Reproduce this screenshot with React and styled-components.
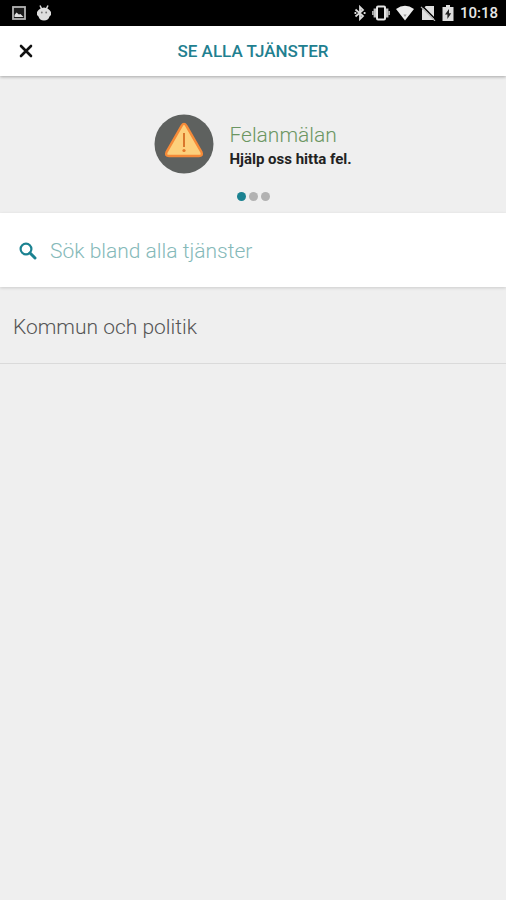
import React, { useState } from "react";
import styled, { createGlobalStyle } from "styled-components";

const slides = [
  { title: "Felanmälan", text: "Hjälp oss hitta fel." },
  { title: "Felanmälan", text: "Hjälp oss hitta fel." },
  { title: "Felanmälan", text: "Hjälp oss hitta fel." },
];

const categories = ["Kommun och politik"];

const StatusIcons = () => (
  <>
    <svg width="14" height="14" viewBox="0 0 14 14">
      <rect x="1" y="1" width="12" height="12" fill="#1c1c1c" stroke="#b4b4b4" strokeWidth="1.8" />
      <path d="M2.5 11V9l2-2.6 2.4 2.2L8.5 8l3 3z" fill="#e0e0e0" />
    </svg>
    <svg width="14" height="16" viewBox="0 0 14 16">
      <path d="M3 .5l2 4M11 .5l-2 4" stroke="#dedede" strokeWidth="1.5" />
      <path d="M1.5 5Q3.5 2.5 7 2.5T12.5 5L14 7v3l-1.5 1.5q-1 4-5.5 4t-5.5-4L0 10V7z" fill="#dedede" />
      <circle cx="4.8" cy="7.5" r="0.9" fill="#777" />
      <circle cx="9.2" cy="7.5" r="0.9" fill="#777" />
    </svg>
  </>
);

const SystemIcons = () => (
  <>
    <svg width="12" height="16" viewBox="0 0 12 16">
      <path d="M1.5 4.5 9 11 6 14V2l3 3-7.5 6.5" fill="none" stroke="#dcdcdc" strokeWidth="1.8" />
      <path d="M.5 7h1.8v2H.5zM9.7 7h1.8v2H9.7z" fill="#dcdcdc" />
    </svg>
    <svg width="18" height="16" viewBox="0 0 18 16">
      <rect x="5" y="1.5" width="8" height="13" rx="1" fill="none" stroke="#e4e4e4" strokeWidth="2" />
      <path d="M2.8 3.5v9M15.2 3.5v9" stroke="#c4c4c4" strokeWidth="2.4" />
      <path d="M.9 6v4M17.1 6v4" stroke="#aaa" strokeWidth="1.8" />
    </svg>
    <svg width="18" height="16" viewBox="0 0 18 16">
      <path d="M0 4Q9-2.4 18 4L9 15.5z" fill="#ececec" />
      <path d="M7.4 9.4h3.2L9 12z" fill="#999" />
    </svg>
    <svg width="16" height="16" viewBox="0 0 16 16">
      <path d="M5.8 1H14v14H2V4.8z" fill="#dedede" />
      <path d="M2 .8 16 14.8" stroke="#000" strokeWidth="1.6" />
      <path d="M1 1.8 15 15.8" stroke="#b8b8b8" strokeWidth="1.2" />
    </svg>
    <svg width="12" height="16" viewBox="0 0 12 16">
      <path d="M4 0h4v2h3.5v14H.5V2H4z" fill="#dedede" />
      <path d="M7 4 3 9.6h2.4V14l3.8-5.8H7z" fill="#222" />
    </svg>
  </>
);

const WarningIcon = () => (
  <svg width="60" height="60" viewBox="0 0 60 60" aria-hidden="true">
    <circle cx="30" cy="30" r="29.5" fill="#5e615f" />
    <path
      d="M27.6 11.8Q30 8 32.4 11.8L47.5 38.2Q49 42 45 42H15Q11 42 12.5 38.2Z"
      fill="#fdd07c"
      stroke="#f58a38"
      strokeWidth="2.4"
      strokeLinejoin="round"
    />
    <path d="M30 19v14" stroke="#d9772c" strokeWidth="2" />
    <circle cx="30" cy="36.5" r="1.6" fill="#e6782a" />
  </svg>
);

const App = () => {
  const [active, setActive] = useState(0);
  const [query, setQuery] = useState("");
  const slide = slides[active];

  return (
    <Page>
      <GlobalStyle />
      <StatusBar>
        <StatusGroup $gap={11}>
          <StatusIcons />
        </StatusGroup>
        <StatusGroup $gap={6}>
          <SystemIcons />
          <Clock>10:18</Clock>
        </StatusGroup>
      </StatusBar>

      <Header>
        <CloseButton type="button" aria-label="Stäng">
          <svg width="14" height="14" viewBox="0 0 14 14">
            <path d="M2 2l10 10M12 2 2 12" stroke="#111" strokeWidth="2.6" strokeLinecap="round" />
          </svg>
        </CloseButton>
        <Title>Se alla tjänster</Title>
      </Header>

      <Carousel>
        <Slide href="#felanmalan">
          <WarningIcon />
          <SlideText>
            <SlideTitle>{slide.title}</SlideTitle>
            <SlideInfo>{slide.text}</SlideInfo>
          </SlideText>
        </Slide>
        <Dots>
          {slides.map((item, index) => (
            <Dot
              key={index}
              type="button"
              aria-label={`${index + 1}`}
              $active={index === active}
              onClick={() => setActive(index)}
            />
          ))}
        </Dots>
      </Carousel>

      <SearchBar>
        <svg width="18" height="18" viewBox="0 0 18 18" aria-hidden="true">
          <circle cx="7" cy="7" r="5.4" fill="none" stroke="#1b8291" strokeWidth="2.2" />
          <path d="M11 11l5 5" stroke="#1b8291" strokeWidth="3" strokeLinecap="round" />
        </svg>
        <SearchInput
          type="text"
          aria-label="Sök bland alla tjänster"
          placeholder="Sök bland alla tjänster"
          value={query}
          onChange={(e) => setQuery(e.target.value)}
        />
      </SearchBar>

      <CategoryList>
        {categories.map((name) => (
          <li key={name}>
            <CategoryLink href="#kommun">{name}</CategoryLink>
          </li>
        ))}
      </CategoryList>
    </Page>
  );
};

const GlobalStyle = createGlobalStyle`
  * {
    box-sizing: border-box;
  }
  body {
    margin: 0;
    background: #efefef;
    font-family: Roboto, "Liberation Sans", sans-serif;
  }
`;

const Page = styled.div`
  min-height: 100vh;
  background: #efefef;
`;

const StatusBar = styled.div`
  display: flex;
  align-items: center;
  justify-content: space-between;
  height: 26px;
  padding: 0 8px 0 12px;
  background: #000;
`;

const StatusGroup = styled.div`
  display: flex;
  align-items: center;
  gap: ${(props) => props.$gap}px;
`;

const Clock = styled.span`
  color: #e6e6e6;
  font-size: 15px;
  font-weight: 500;
  line-height: 20px;
`;

const Header = styled.header`
  display: grid;
  grid-template-columns: 52px 1fr 52px;
  align-items: center;
  height: 50px;
  background: #fff;
  box-shadow: 0 1px 3px rgba(0, 0, 0, 0.3);
`;

const CloseButton = styled.button`
  display: flex;
  align-items: center;
  justify-content: center;
  height: 50px;
  padding: 0;
  border: 0;
  background: none;
  cursor: pointer;
`;

const Title = styled.h1`
  margin: 0;
  color: #1f8090;
  font-size: 17px;
  font-weight: 500;
  line-height: 20px;
  text-align: center;
  text-transform: uppercase;
`;

const Carousel = styled.section`
  display: flex;
  flex-direction: column;
  align-items: center;
  gap: 18px;
  padding: 38px 16px 12px;
`;

const Slide = styled.a`
  display: flex;
  align-items: center;
  gap: 15px;
  text-decoration: none;
`;

const SlideText = styled.div`
  display: flex;
  flex-direction: column;
  padding-top: 2px;
`;

const SlideTitle = styled.h2`
  margin: 0;
  color: #6b9662;
  font-size: 21px;
  font-weight: 300;
  line-height: 28px;
`;

const SlideInfo = styled.p`
  margin: 0;
  color: #222;
  font-size: 15px;
  font-weight: 700;
  line-height: 20px;
`;

const Dots = styled.div`
  display: flex;
  gap: 3px;
`;

const Dot = styled.button`
  width: 9px;
  height: 9px;
  padding: 0;
  border: 0;
  border-radius: 50%;
  background: ${(props) => (props.$active ? "#1b8291" : "#b2b2b2")};
  cursor: pointer;
`;

const SearchBar = styled.div`
  display: flex;
  align-items: center;
  gap: 13px;
  height: 74px;
  padding: 2px 19px 0;
  background: #fff;
  box-shadow: 0 1px 3px rgba(0, 0, 0, 0.15);
`;

const SearchInput = styled.input`
  flex: 1;
  min-width: 0;
  padding: 0;
  border: 0;
  outline: 0;
  background: none;
  color: #1b8291;
  font-family: inherit;
  font-size: 21px;
  font-weight: 300;
  line-height: 28px;

  &::placeholder {
    color: #85b9b9;
    opacity: 1;
  }
`;

const CategoryList = styled.ul`
  margin: 0;
  padding: 0;
  list-style: none;
`;

const CategoryLink = styled.a`
  display: block;
  padding: 26px 13px 22px;
  border-bottom: 1px solid #dadada;
  color: #555;
  font-size: 21px;
  font-weight: 300;
  line-height: 28px;
  text-decoration: none;
`;

export default App;
